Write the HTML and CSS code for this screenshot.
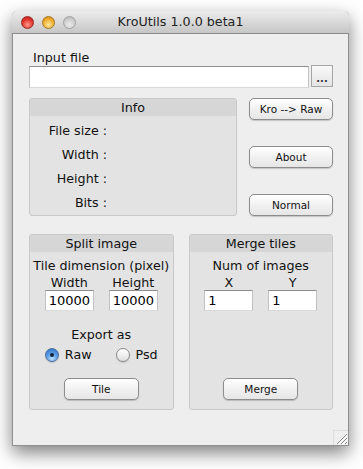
FILE: index.html
```html
<!DOCTYPE html>
<html lang="en">
<head>
  <meta charset="UTF-8">
  <meta name="viewport" content="width=device-width, initial-scale=1.0">
  <title>KroUtils 1.0.0 beta1</title>
  <link rel="stylesheet" href="styles.css">
</head>
<body>
  <div class="window">
    <div class="titlebar">
      <div class="lights">
        <span class="light red"></span>
        <span class="light yellow"></span>
        <span class="light grey"></span>
      </div>
      <div class="title">KroUtils 1.0.0 beta1</div>
    </div>

    <div class="content">
      <label class="field-label" for="inputFile">Input file</label>
      <div class="file-row">
        <input type="text" id="inputFile" class="text-field file-input">
        <button class="browse">...</button>
      </div>

      <div class="middle">
        <div class="panel info">
          <div class="panel-head">Info</div>
          <div class="info-rows">
            <div class="info-row">File size :</div>
            <div class="info-row">Width :</div>
            <div class="info-row">Height :</div>
            <div class="info-row">Bits :</div>
          </div>
        </div>
        <div class="actions">
          <button class="btn">Kro --&gt; Raw</button>
          <button class="btn">About</button>
          <button class="btn">Normal</button>
        </div>
      </div>

      <div class="bottom">
        <div class="panel tool">
          <div class="panel-head">Split image</div>
          <div class="tool-title">Tile dimension (pixel)</div>
          <div class="pair">
            <div class="pair-col">
              <span class="pair-label">Width</span>
              <input type="text" class="text-field small" value="10000">
            </div>
            <div class="pair-col">
              <span class="pair-label">Height</span>
              <input type="text" class="text-field small" value="10000">
            </div>
          </div>
          <div class="export-label">Export as</div>
          <div class="radios">
            <label class="radio"><span class="dot checked"></span>Raw</label>
            <label class="radio"><span class="dot"></span>Psd</label>
          </div>
          <button class="btn tool-btn">Tile</button>
        </div>

        <div class="panel tool">
          <div class="panel-head">Merge tiles</div>
          <div class="tool-title">Num of images</div>
          <div class="pair">
            <div class="pair-col">
              <span class="pair-label">X</span>
              <input type="text" class="text-field small" value="1">
            </div>
            <div class="pair-col">
              <span class="pair-label">Y</span>
              <input type="text" class="text-field small" value="1">
            </div>
          </div>
          <button class="btn tool-btn push">Merge</button>
        </div>
      </div>
    </div>

    <div class="grip">
      <svg width="14" height="14" viewBox="0 0 14 14">
        <path d="M13 3 L3 13 M13 7 L7 13 M13 11 L11 13" stroke="#8c8c8c" stroke-width="1" fill="none"/>
        <path d="M14 4 L4 14 M14 8 L8 14" stroke="#ffffff" stroke-width="1" fill="none"/>
      </svg>
    </div>
  </div>
</body>
</html>
```

FILE: styles.css
```css
html, body {
  margin: 0;
  padding: 0;
}
body {
  background-color: #ffffff;
  padding: 11px 0 0 12px;
  height: 469px;
  box-sizing: border-box;
  overflow: hidden;
  font-family: 'DejaVu Sans', 'Liberation Sans', sans-serif;
  font-size: 13px;
  color: #111;
}
.window {
  position: relative;
  width: 337px;
  height: 435px;
  box-sizing: border-box;
  background-color: #eeeeee;
  border: 1px solid #8f8f8f;
  border-top: none;
  border-radius: 5px 5px 0 0;
  box-shadow: 0 7px 18px rgba(0, 0, 0, 0.5);
}
.titlebar {
  position: relative;
  height: 22px;
  margin: 0 -1px;
  border-radius: 5px 5px 0 0;
  background: linear-gradient(#ececec, #c6c6c6);
  border-bottom: 1px solid #8a8a8a;
  display: flex;
  align-items: center;
  justify-content: center;
}
.lights {
  position: absolute;
  left: 9px;
  top: 5px;
  display: flex;
  gap: 8px;
}
.light {
  width: 13px;
  height: 13px;
  border-radius: 50%;
  box-sizing: border-box;
}
.red {
  background: radial-gradient(circle at 50% 70%, #ff9a8e 0%, #e2352d 55%, #b51e1a 100%);
  border: 1px solid #9c2a26;
}
.yellow {
  background: radial-gradient(circle at 50% 70%, #ffe7a0 0%, #f0b030 55%, #c9801a 100%);
  border: 1px solid #a8781e;
}
.grey {
  background: radial-gradient(circle at 50% 70%, #ececec 0%, #cfcfcf 55%, #b0b0b0 100%);
  border: 1px solid #a3a3a3;
}
.title {
  font-size: 12.7px;
  color: #222;
  line-height: 22px;
}
.content {
  padding: 16px 15px 0 16px;
}
.field-label {
  display: block;
  line-height: 16px;
  font-size: 12.7px;
  padding-left: 4px;
}
.file-row {
  display: flex;
  gap: 2px;
  height: 22px;
}
.text-field {
  box-sizing: border-box;
  background-color: #fff;
  border: 1px solid #c2c2c2;
  border-top-color: #8e8e8e;
  border-bottom-color: #dadada;
  font-family: 'DejaVu Sans', sans-serif;
  font-size: 13px;
  color: #000;
  padding: 0 3px;
  margin: 0;
  outline: none;
}
.file-input {
  width: 280px;
  height: 22px;
}
.browse {
  width: 22px;
  height: 22px;
  margin-top: -1px;
  padding: 0;
  box-sizing: border-box;
  border: 1px solid #a6a6a6;
  background: linear-gradient(#f8f8f8, #e4e4e4);
  font-family: 'DejaVu Sans', sans-serif;
  font-size: 10px;
  font-weight: bold;
  color: #333;
  line-height: 26px;
}
.middle {
  display: flex;
  gap: 12px;
  margin-top: 10px;
}
.panel {
  box-sizing: border-box;
  border: 1px solid #c9c9c9;
  border-radius: 3px;
  background-color: #e3e3e3;
  overflow: hidden;
}
.panel-head {
  height: 17px;
  line-height: 17px;
  text-align: center;
  background-color: #d6d6d6;
  font-size: 12.7px;
}
.info {
  width: 208px;
  height: 118px;
}
.info-rows {
  padding-top: 3px;
}
.info-row {
  width: 77px;
  text-align: right;
  line-height: 24px;
  font-size: 12.7px;
}
.actions {
  width: 84px;
  height: 118px;
  display: flex;
  flex-direction: column;
  justify-content: space-between;
}
.btn {
  height: 22px;
  box-sizing: border-box;
  border: 1px solid #8c8c8c;
  border-radius: 5px;
  background: linear-gradient(#ffffff, #f1f1f1 50%, #e6e6e6);
  box-shadow: 0 1px 1px rgba(0, 0, 0, 0.18);
  font-family: 'DejaVu Sans', sans-serif;
  font-size: 10.5px;
  color: #111;
  padding: 0;
  cursor: pointer;
}
.bottom {
  display: flex;
  gap: 15px;
  margin-top: 18px;
}
.tool {
  width: 145px;
  height: 176px;
  display: flex;
  flex-direction: column;
  align-items: center;
}
.tool .panel-head {
  align-self: stretch;
}
.tool-title {
  margin-top: 6px;
  line-height: 16px;
  font-size: 12.7px;
}
.pair {
  display: flex;
  gap: 15px;
  margin-top: 2px;
}
.pair-col {
  display: flex;
  flex-direction: column;
  align-items: center;
  width: 49px;
}
.pair-label {
  line-height: 14px;
  font-size: 12.7px;
}
.small {
  width: 49px;
  height: 21px;
}
.export-label {
  margin-top: 16px;
  line-height: 16px;
  font-size: 12.7px;
}
.radios {
  display: flex;
  gap: 24px;
  margin-top: 4px;
  line-height: 16px;
  font-size: 12.7px;
}
.radio {
  display: flex;
  align-items: center;
  gap: 6px;
}
.dot {
  position: relative;
  width: 14px;
  height: 14px;
  box-sizing: border-box;
  border-radius: 50%;
  border: 1px solid #8a8a8a;
  background: linear-gradient(#ffffff, #dedede);
  box-shadow: 0 1px 1px rgba(0, 0, 0, 0.15);
}
.dot.checked {
  border-color: #4d6f9e;
  background: radial-gradient(circle at 50% 80%, #bfe0ff 0%, #5c9ee6 45%, #2b6cc4 100%);
}
.dot.checked::after {
  content: "";
  position: absolute;
  left: 4px;
  top: 4px;
  width: 4px;
  height: 4px;
  border-radius: 50%;
  background-color: #14233a;
}
.tool-btn {
  width: 75px;
  margin-top: 15px;
}
.tool-btn.push {
  margin-top: auto;
  margin-bottom: 9px;
}
.grip {
  position: absolute;
  right: 0;
  bottom: 0;
  width: 14px;
  height: 14px;
  border-left: 1px solid #dcdcdc;
  border-top: 1px solid #dcdcdc;
}
```
